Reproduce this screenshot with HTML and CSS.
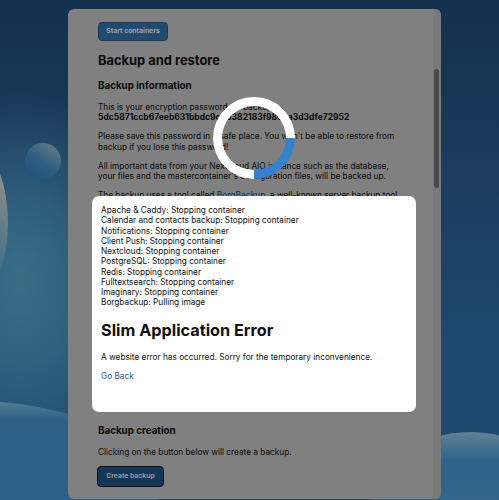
FILE: index.html
```html
<!DOCTYPE html>
<html lang="en">
<head>
<meta charset="utf-8">
<title>Backup and restore</title>
<link rel="stylesheet" href="styles.css">
</head>
<body>
<div class="art" aria-hidden="true">
  <div class="moon"></div>
  <div class="planet"></div>
  <div class="hill hill-left"></div>
  <div class="hill hill-right"></div>
</div>
<main class="panel">
  <div class="scroll">
    <button class="btn">Start containers</button>
    <h2>Backup and restore</h2>
    <h3 class="first">Backup information</h3>
    <p>This is your encryption password for backups:<br><b>5dc5871ccb67eeb631bbdc9c4b382183f98c0a3d3dfe72952</b></p>
    <p>Please save this password in a safe place. You won't be able to restore from backup if you lose this password!</p>
    <p>All important data from your Nextcloud AIO instance such as the database, your files and the mastercontainer's configuration files, will be backed up.</p>
    <p>The backup uses a tool called <a href="#">BorgBackup</a>, a well-known server backup tool</p>
    <div class="hidden-gap"></div>
    <h3>Backup creation</h3>
    <p>Clicking on the button below will create a backup.</p>
    <button class="btn btn-focus">Create backup</button>
    <h3>Backup restore</h3>
  </div>
  <div class="track"><div class="thumb"></div></div>
</main>
<div class="spinner"></div>
<section class="dialog">
  <ul class="log">
    <li>Apache &amp; Caddy: Stopping container</li>
    <li>Calendar and contacts backup: Stopping container</li>
    <li>Notifications: Stopping container</li>
    <li>Client Push: Stopping container</li>
    <li>Nextcloud: Stopping container</li>
    <li>PostgreSQL: Stopping container</li>
    <li>Redis: Stopping container</li>
    <li>Fulltextsearch: Stopping container</li>
    <li>Imaginary: Stopping container</li>
    <li>Borgbackup: Pulling image</li>
  </ul>
  <h1>Slim Application Error</h1>
  <p>A website error has occurred. Sorry for the temporary inconvenience.</p>
  <a href="#">Go Back</a>
</section>
</body>
</html>
```
FILE: styles.css
```css
* { box-sizing: border-box; }
html, body { height: 100%; margin: 0; }
body {
  position: relative;
  overflow: hidden;
  display: flex;
  justify-content: flex-start;
  align-items: flex-start;
  padding: 9px 0 0 68px;
  font-family: Inter, "Liberation Sans", sans-serif;
  font-size: 8.25px;
  line-height: 10.25px;
  color: #0a0a0a;
  background: linear-gradient(180deg, #14304f 0%, #1a3c5e 35%, #1f4a70 70%, #1e4a70 100%);
}
.art {
  position: absolute; inset: 0; overflow: hidden;
  background: radial-gradient(ellipse 130px 190px at 20px 280px, #3a6f88 0%, rgba(58, 111, 136, 0.6) 45%, rgba(58, 111, 136, 0) 100%);
}
.moon {
  position: absolute; left: 25px; top: 143px; width: 36px; height: 36px; border-radius: 50%;
  background: linear-gradient(215deg, #6f8088 0%, #2d5d82 55%, #234e78 100%);
}
.planet {
  position: absolute; left: -52px; top: 150px; width: 60px; height: 146px; border-radius: 50%;
  background: linear-gradient(25deg, #3a6b85 25%, #808a8c 75%);
}
.hill { position: absolute; border-radius: 50%; }
.hill-left {
  left: -240px; top: 400px; width: 400px; height: 175px;
  background: linear-gradient(180deg, #587c94 0%, #2d5f88 12%, #2c628a 100%);
}
.hill-right {
  left: 370px; top: 432px; width: 200px; height: 160px;
  background: linear-gradient(180deg, #5f8296 0%, #2f628a 18%, #386a8c 100%);
}
.panel {
  position: relative;
  width: 373px;
  height: 490px;
  flex: none;
  overflow: hidden;
  border-radius: 6px;
  background: #808080;
  display: flex;
}
.scroll { flex: 1; min-width: 0; padding: 13px 29px 0 30px; }
.track { flex: none; width: 8px; background: #797979; padding: 60px 2px 0 1px; }
.thumb { height: 119px; border-radius: 3px; background: #4a4a4a; }
.btn {
  display: block;
  height: 19px;
  width: 70px;
  padding: 0;
  border: 1px solid #1a3d5e;
  border-radius: 4px;
  background: #234a6e;
  color: #9aa5ae;
  font: 700 6.8px/1 Inter, "Liberation Sans", sans-serif;
}
.btn-focus {
  width: 67px; height: 21px; margin: 9px 0 0 -1px;
  background: #163656; border: 1px solid #0b0f14; border-radius: 4px;
  color: #8a98a5;
}
h2 { margin: 12px 0 0; font-size: 12.9px; line-height: 16px; font-weight: 700; }
h3 { margin: 8px 0 0; font-size: 9.8px; line-height: 14px; font-weight: 700; }
h3.first { margin: 10px 0 9px; }
.btn-focus + h3 { margin-top: 10px; }
p { margin: 8.75px 0 0; }
b { font-size: 8.5px; font-weight: 700; }
a { color: #17426b; font-weight: 600; text-decoration: none; }
.hidden-gap { height: 216px; }
.spinner {
  position: absolute; left: 213px; top: 97px; width: 82px; height: 82px;
  border: 9px solid #fff; border-right-color: #3581cf; border-radius: 50%;
  transform: rotate(45deg);
}
.dialog {
  position: absolute; left: 92px; top: 196px; width: 324px; height: 216px;
  padding: 9px 9px 0;
  border-radius: 7px;
  background: #fff;
  color: #111;
}
.log { list-style: none; margin: 0; padding: 0; }
.dialog h1 { margin: 11px 0 0; font-size: 16.25px; line-height: 22px; font-weight: 700; }
.dialog p { margin: 11px 0 0; }
.dialog a { display: block; margin-top: 9px; color: #1f5d9c; font-weight: 400; }
```
